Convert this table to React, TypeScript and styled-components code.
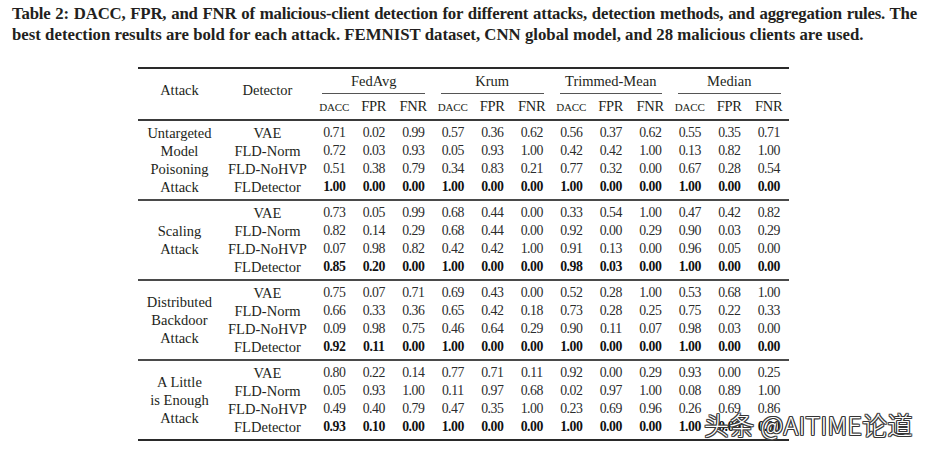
import React from 'react';
import styled, { createGlobalStyle } from 'styled-components';

const Global = createGlobalStyle`
  html, body { margin: 0; padding: 0; background: #fff; }
  body {
    width: 927px; height: 452px; overflow: hidden;
    font-family: "Liberation Serif", "Times New Roman", serif;
    color: #231f20;
  }
`;

const Page = styled.div`
  position: relative;
  width: 927px;
  height: 452px;
`;

const Caption = styled.div`
  width: 905px;
  padding: 3px 0 0 12px;
  font-weight: 700;
  font-size: 16.8px;
  line-height: 21px;
`;

const CapLine = styled.div<{ $justify?: boolean }>`
  white-space: nowrap;
  text-align: ${(p) => (p.$justify ? 'justify' : 'left')};
  text-align-last: ${(p) => (p.$justify ? 'justify' : 'auto')};
  letter-spacing: ${(p) => (p.$justify ? '-0.2px' : '0')};
`;

const Table = styled.table`
  margin: 22px auto 0;
  border-collapse: separate;
  border-spacing: 0;
  table-layout: fixed;
  width: 650px;
  font-size: 14.5px;
  border-top: 2px solid #2a2a2a;
  border-bottom: 2px solid #2a2a2a;
`;

const HeadCell = styled.th`
  padding: 0;
  font-weight: 400;
  text-align: center;
  vertical-align: top;
  line-height: 18px;
  padding-top: 12px;
  border-bottom: 2px solid #3a3a3a;
`;

const GroupCell = styled.th`
  padding: 0;
  font-weight: 400;
  vertical-align: bottom;
`;

const GroupLabel = styled.div`
  margin: 0 8px;
  line-height: 24px;
  text-align: center;
  border-bottom: 1px solid #555;
`;

const SubCell = styled.th<{ $small?: boolean }>`
  padding: 0;
  font-weight: 400;
  text-align: center;
  line-height: 25px;
  border-bottom: 2px solid #3a3a3a;
  font-size: ${(p) => (p.$small ? '15px' : '14.5px')};
  font-variant: ${(p) => (p.$small ? 'small-caps' : 'normal')};
  letter-spacing: ${(p) => (p.$small ? '-0.1px' : '-0.3px')};
`;

const Cell = styled.td<{ $first?: boolean; $last?: boolean; $rule?: boolean }>`
  padding: ${(p) => (p.$first ? '3px' : '0')} 0 ${(p) => (p.$last ? '3px' : '0')};
  line-height: 18px;
  text-align: center;
  white-space: nowrap;
  border-bottom: ${(p) => (p.$rule ? '2px solid #4a4a4a' : 'none')};
`;

const AttackCell = styled.td<{ $rule?: boolean }>`
  padding: 0;
  line-height: 18px;
  text-align: center;
  vertical-align: middle;
  border-bottom: ${(p) => (p.$rule ? '2px solid #4a4a4a' : 'none')};
`;

const Num = styled(Cell)<{ $bold?: boolean }>`
  font-size: 13.8px;
  letter-spacing: -0.5px;
  font-weight: ${(p) => (p.$bold ? 700 : 400)};
  color: ${(p) => (p.$bold ? '#111' : '#2b2b2b')};
`;

const Watermark = styled.div`
  position: absolute;
  left: 704px;
  top: 409px;
  font-family: "Noto Sans CJK SC", "Noto Sans", sans-serif;
  font-weight: 300;
  font-size: 25px;
  letter-spacing: 0.3px;
  line-height: 30px;
  color: #fff;
  white-space: nowrap;
  text-shadow: 1px 0 #333, -1px 0 #333, 0 1px #333, 0 -1px #333,
    1px 1px #555, -1px -1px #555, 1px -1px #555, -1px 1px #555;
`;

type Row = { det: string; vals: string[]; bold?: boolean };
type Group = { attack: string[]; rows: Row[] };

const groups: Group[] = [
  {
    attack: ['Untargeted', 'Model', 'Poisoning', 'Attack'],
    rows: [
      { det: 'VAE', vals: ['0.71', '0.02', '0.99', '0.57', '0.36', '0.62', '0.56', '0.37', '0.62', '0.55', '0.35', '0.71'] },
      { det: 'FLD-Norm', vals: ['0.72', '0.03', '0.93', '0.05', '0.93', '1.00', '0.42', '0.42', '1.00', '0.13', '0.82', '1.00'] },
      { det: 'FLD-NoHVP', vals: ['0.51', '0.38', '0.79', '0.34', '0.83', '0.21', '0.77', '0.32', '0.00', '0.67', '0.28', '0.54'] },
      { det: 'FLDetector', bold: true, vals: ['1.00', '0.00', '0.00', '1.00', '0.00', '0.00', '1.00', '0.00', '0.00', '1.00', '0.00', '0.00'] },
    ],
  },
  {
    attack: ['Scaling', 'Attack'],
    rows: [
      { det: 'VAE', vals: ['0.73', '0.05', '0.99', '0.68', '0.44', '0.00', '0.33', '0.54', '1.00', '0.47', '0.42', '0.82'] },
      { det: 'FLD-Norm', vals: ['0.82', '0.14', '0.29', '0.68', '0.44', '0.00', '0.92', '0.00', '0.29', '0.90', '0.03', '0.29'] },
      { det: 'FLD-NoHVP', vals: ['0.07', '0.98', '0.82', '0.42', '0.42', '1.00', '0.91', '0.13', '0.00', '0.96', '0.05', '0.00'] },
      { det: 'FLDetector', bold: true, vals: ['0.85', '0.20', '0.00', '1.00', '0.00', '0.00', '0.98', '0.03', '0.00', '1.00', '0.00', '0.00'] },
    ],
  },
  {
    attack: ['Distributed', 'Backdoor', 'Attack'],
    rows: [
      { det: 'VAE', vals: ['0.75', '0.07', '0.71', '0.69', '0.43', '0.00', '0.52', '0.28', '1.00', '0.53', '0.68', '1.00'] },
      { det: 'FLD-Norm', vals: ['0.66', '0.33', '0.36', '0.65', '0.42', '0.18', '0.73', '0.28', '0.25', '0.75', '0.22', '0.33'] },
      { det: 'FLD-NoHVP', vals: ['0.09', '0.98', '0.75', '0.46', '0.64', '0.29', '0.90', '0.11', '0.07', '0.98', '0.03', '0.00'] },
      { det: 'FLDetector', bold: true, vals: ['0.92', '0.11', '0.00', '1.00', '0.00', '0.00', '1.00', '0.00', '0.00', '1.00', '0.00', '0.00'] },
    ],
  },
  {
    attack: ['A Little', 'is Enough', 'Attack'],
    rows: [
      { det: 'VAE', vals: ['0.80', '0.22', '0.14', '0.77', '0.71', '0.11', '0.92', '0.00', '0.29', '0.93', '0.00', '0.25'] },
      { det: 'FLD-Norm', vals: ['0.05', '0.93', '1.00', '0.11', '0.97', '0.68', '0.02', '0.97', '1.00', '0.08', '0.89', '1.00'] },
      { det: 'FLD-NoHVP', vals: ['0.49', '0.40', '0.79', '0.47', '0.35', '1.00', '0.23', '0.69', '0.96', '0.26', '0.69', '0.86'] },
      { det: 'FLDetector', bold: true, vals: ['0.93', '0.10', '0.00', '1.00', '0.00', '0.00', '1.00', '0.00', '0.00', '1.00', '0.00', '0.00'] },
    ],
  },
];

const rules = ['FedAvg', 'Krum', 'Trimmed-Mean', 'Median'];

export default function App() {
  return (
    <Page>
      <Global />
      <Caption>
        <CapLine $justify>
          Table 2: DACC, FPR, and FNR of malicious-client detection for different attacks, detection methods, and aggregation rules. The
        </CapLine>
        <CapLine>
          best detection results are bold for each attack. FEMNIST dataset, CNN global model, and 28 malicious clients are used.
        </CapLine>
      </Caption>
      <Table>
        <colgroup>
          <col style={{ width: 82 }} />
          <col style={{ width: 94 }} />
          {Array.from({ length: 12 }).map((_, i) => (
            <col key={i} style={{ width: 39.5 }} />
          ))}
        </colgroup>
        <thead>
          <tr>
            <HeadCell rowSpan={2}>Attack</HeadCell>
            <HeadCell rowSpan={2}>Detector</HeadCell>
            {rules.map((r) => (
              <GroupCell key={r} colSpan={3}>
                <GroupLabel>{r}</GroupLabel>
              </GroupCell>
            ))}
          </tr>
          <tr>
            {rules.map((r) => (
              <React.Fragment key={r}>
                <SubCell $small>dacc</SubCell>
                <SubCell>FPR</SubCell>
                <SubCell>FNR</SubCell>
              </React.Fragment>
            ))}
          </tr>
        </thead>
        {groups.map((g, gi) => {
          const isLastGroup = gi === groups.length - 1;
          return (
            <tbody key={gi}>
              {g.rows.map((r, ri) => {
                const first = ri === 0;
                const last = ri === g.rows.length - 1;
                const rule = last && !isLastGroup;
                return (
                  <tr key={ri}>
                    {first && (
                      <AttackCell rowSpan={g.rows.length} $rule={!isLastGroup}>
                        {g.attack.map((l, li) => (
                          <div key={li}>{l}</div>
                        ))}
                      </AttackCell>
                    )}
                    <Cell $first={first} $last={last} $rule={rule}>
                      {r.det}
                    </Cell>
                    {r.vals.map((v, vi) => (
                      <Num key={vi} $first={first} $last={last} $rule={rule} $bold={r.bold}>
                        {v}
                      </Num>
                    ))}
                  </tr>
                );
              })}
            </tbody>
          );
        })}
      </Table>
      <Watermark>头条 @AITIME论道</Watermark>
    </Page>
  );
}
